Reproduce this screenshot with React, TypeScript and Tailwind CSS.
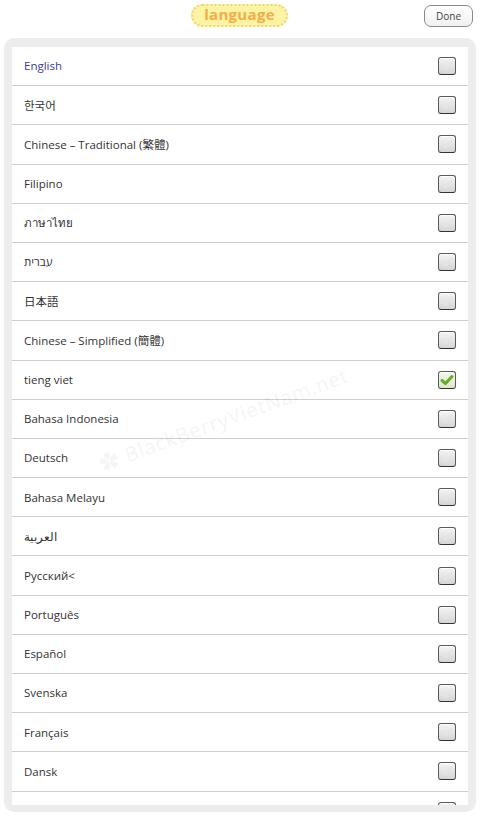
import { useState } from 'react';

const languages = [
  'English',
  '한국어',
  'Chinese – Traditional (繁體)',
  'Filipino',
  'ภาษาไทย',
  'עברית',
  '日本語',
  'Chinese – Simplified (簡體)',
  'tieng viet',
  'Bahasa Indonesia',
  'Deutsch',
  'Bahasa Melayu',
  'العربية',
  'Русский<',
  'Português',
  'Español',
  'Svenska',
  'Français',
  'Dansk',
  '',
];

function CheckBox({ checked }: { checked: boolean }) {
  return (
    <div
      className={
        'w-[18px] h-[18px] rounded-[3px] border border-[#5a5a5a] border-b-[#333] shadow-[inset_0_1px_0_#fff] flex items-center justify-center ' +
        (checked
          ? 'bg-gradient-to-b from-[#f4f8e8] to-[#dfe6cf]'
          : 'bg-gradient-to-b from-[#f4f4f4] to-[#d6d6d6]')
      }
    >
      <svg width="14" height="12" viewBox="0 0 14 12">
        <path
          d="M2 6.5 L5.5 9.5 L12 2.5"
          fill="none"
          stroke={checked ? '#62ad22' : '#e4e4e4'}
          strokeWidth={checked ? 3 : 2}
          strokeLinecap="round"
          strokeLinejoin="round"
        />
      </svg>
    </div>
  );
}

export default function App() {
  const [selected, setSelected] = useState('tieng viet');

  return (
    <div className="w-[480px] h-[819px] bg-white overflow-hidden relative font-['Open_Sans','Noto_Sans','Noto_Sans_CJK_KR',sans-serif]">
      {/* header */}
      <div className="h-[38px] flex items-center justify-center relative">
        <div className="mb-[8px] ml-[-1px] px-[11px] h-[23px] flex items-center rounded-full bg-[#fdf3a4] border-2 border-dotted border-[#ecd878]">
          <span className="text-[15px] font-bold text-[#f4ad48] tracking-[0.3px] leading-none pb-[2px]">language</span>
        </div>
        <button className="absolute right-[7px] top-[5px] w-[49px] h-[22px] rounded-[7px] border-[1.5px] border-[#8a8a8a] bg-gradient-to-b from-white to-[#f0f0f0] text-[10px] text-[#444] leading-none">
          Done
        </button>
      </div>

      {/* panel */}
      <div className="mx-[4px] h-[774px] rounded-[10px] bg-[#ededed] px-[8px] pt-[9px] pb-[7px]">
        <div className="h-full bg-white overflow-hidden">
          {languages.map((lang, i) => (
            <div
              key={i}
              onClick={() => setSelected(lang)}
              className="h-[39.2px] border-b border-[#cfcfcf] flex items-center justify-between pl-[12px] pr-[12px]"
            >
              <span
                className={
                  'text-[11.5px] ' + (lang === 'English' ? 'text-[#3b3ba0]' : 'text-[#333]')
                }
              >
                {lang}
              </span>
              <CheckBox checked={lang === selected} />
            </div>
          ))}
        </div>
      </div>

      {/* watermark */}
      <div className="absolute left-[92px] top-[405px] -rotate-[20deg] text-[20px] text-[#000] opacity-[0.035] pointer-events-none tracking-[1px]">
        ✿ BlackBerryVietNam.net
      </div>
    </div>
  );
}
